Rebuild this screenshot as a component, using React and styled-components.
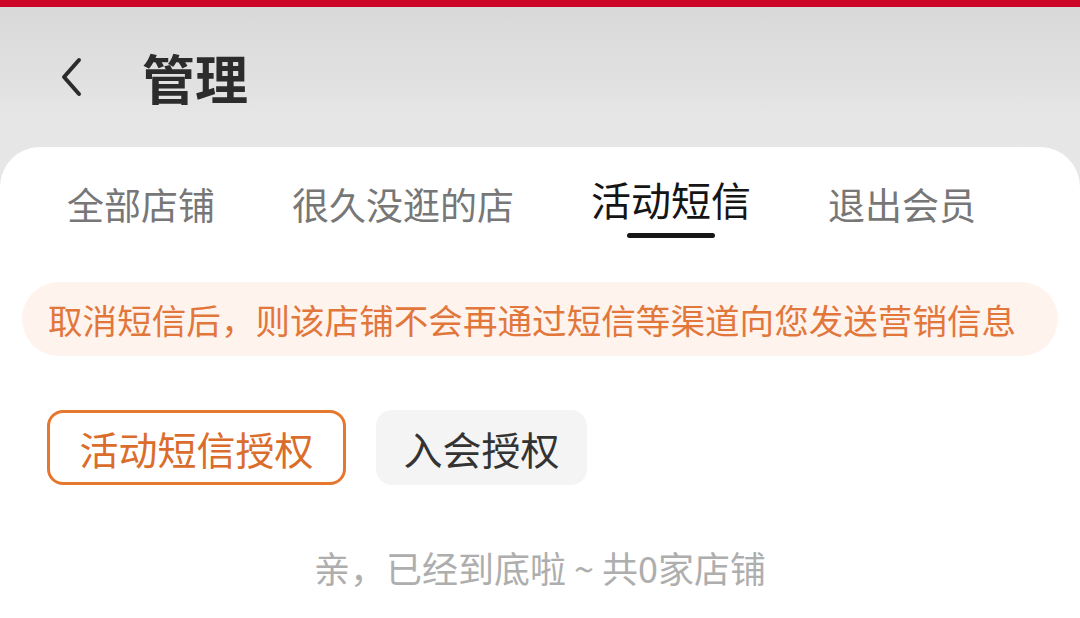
import React from 'react'
import styled, { createGlobalStyle } from 'styled-components'

const GlobalStyle = createGlobalStyle`
    html, body {
        margin: 0;
        padding: 0;
    }
    body {
        font-family: "Noto Sans CJK SC", "Noto Sans", sans-serif;
    }
`;

const Page = styled.div`
    width: 1080px;
    height: 618px;
    overflow: hidden;
    display: flex;
    flex-direction: column;
    background: linear-gradient(180deg, #d8d8d8 0%, #e6e6e6 20%, #ececec 100%);
`;

const StatusStrip = styled.div`
    height: 7px;
    background: #cc0626;
`;

const Header = styled.header`
    height: 140px;
    display: flex;
    align-items: center;
    padding-left: 56px;
    gap: 56px;
`;

const Title = styled.h1`
    margin: 0;
    font-size: 53px;
    font-weight: 700;
    color: #2c2c2c;
    line-height: 1;
`;

const Card = styled.main`
    flex: 1;
    background: #fff;
    border-radius: 40px 40px 0 0;
    display: flex;
    flex-direction: column;
`;

const Tabs = styled.nav`
    display: flex;
    align-items: flex-start;
    gap: 77px;
    padding: 37px 0 0 67px;
`;

const Tab = styled.div`
    display: flex;
    flex-direction: column;
    align-items: center;
    font-size: ${p => (p.$active ? '40px' : '37px')};
    color: ${p => (p.$active ? '#151515' : '#777')};
    white-space: nowrap;
`;

const TabLabel = styled.span`
    line-height: 40px;
    margin-top: ${p => (p.$active ? '-5px' : '0')};
`;

const Underline = styled.span`
    display: block;
    width: 88px;
    height: 5px;
    margin-top: ${p => (p.$show ? '14px' : '9px')};
    border-radius: 3px;
    background: ${p => (p.$show ? '#161616' : 'transparent')};
`;

const Notice = styled.div`
    margin: 44px 22px 0;
    height: 74px;
    border-radius: 37px;
    background: #fff3ee;
    display: flex;
    align-items: center;
    padding-left: 26px;
    font-size: 34.6px;
    color: #e2773c;
    white-space: nowrap;
`;

const ButtonRow = styled.div`
    display: flex;
    gap: 30px;
    padding-left: 47px;
    margin-top: 54px;
`;

const AuthButton = styled.button`
    width: ${p => p.$width}px;
    height: 75px;
    padding: 0;
    box-sizing: border-box;
    display: flex;
    align-items: center;
    justify-content: center;
    border-radius: 16px;
    font-family: inherit;
    font-size: 39px;
    border: ${p => (p.$active ? '3px solid #e6772e' : '3px solid #f4f4f4')};
    background: ${p => (p.$active ? '#fff' : '#f4f4f4')};
    color: ${p => (p.$active ? '#db6d2c' : '#333')};
    cursor: pointer;
`;

const Footer = styled.p`
    margin: 60px 0 0;
    text-align: center;
    font-size: 36px;
    line-height: 44px;
    color: #aeaeae;
`;

const tabs = ['全部店铺', '很久没逛的店', '活动短信', '退出会员']

function BackIcon () {
    return (
        <svg width="30" height="44" viewBox="0 0 30 44" fill="none">
            <path d="M23 5 L8 22 L23 39" stroke="#2c2c2c" strokeWidth="4" strokeLinecap="round" strokeLinejoin="round" />
        </svg>
    )
}

export default function App () {
    const activeTab = 2
    return (
        <>
            <GlobalStyle />
            <Page>
                <StatusStrip />
                <Header>
                    <BackIcon />
                    <Title>管理</Title>
                </Header>
                <Card>
                    <Tabs>
                        {tabs.map((t, i) => (
                            <Tab key={t} $active={i === activeTab}>
                                <TabLabel $active={i === activeTab}>{t}</TabLabel>
                                <Underline $show={i === activeTab} />
                            </Tab>
                        ))}
                    </Tabs>
                    <Notice>取消短信后，则该店铺不会再通过短信等渠道向您发送营销信息</Notice>
                    <ButtonRow>
                        <AuthButton $active $width={299}>活动短信授权</AuthButton>
                        <AuthButton $width={211}>入会授权</AuthButton>
                    </ButtonRow>
                    <Footer>亲，已经到底啦 ~ 共0家店铺</Footer>
                </Card>
            </Page>
        </>
    )
}
